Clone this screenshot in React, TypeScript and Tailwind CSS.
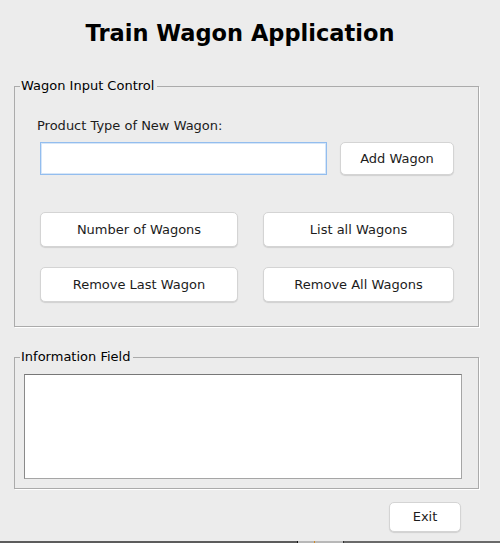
import React from "react";

const font = { fontFamily: '"DejaVu Sans", "Liberation Sans", sans-serif' };

function MacButton({ label, className }: { label: string; className: string }) {
  return (
    <button
      type="button"
      className={`shrink-0 rounded-[5px] border border-[#d4d4d4] bg-white text-[13px] text-[#1c1c1c] shadow-[0_1px_1px_rgba(0,0,0,0.12)] ${className}`}
    >
      {label}
    </button>
  );
}

export default function App() {
  return (
    <div className="flex h-[543px] w-[500px] flex-col overflow-hidden bg-[#ececec] text-black" style={font}>
      <h1 className="w-[480px] pt-[18px] text-center text-[22.5px] font-bold leading-[30px]">
        Train Wagon Application
      </h1>

      {/* Wagon input panel */}
      <fieldset className="ml-[14px] mt-[30px] w-[465px] border border-[#ababab] p-0 pb-[24px] shadow-[1px_1px_0_#ffffff]">
        <legend className="ml-[5px] pl-[1px] pr-[3px] text-[13px] leading-[16px]">Wagon Input Control</legend>
        <div className="ml-[22px] mt-[24px] text-[13px] leading-[16px] text-[#1c1c1c]">Product Type of New Wagon:</div>
        <div className="ml-[25px] mt-[8px] flex gap-[13px]">
          <input
            type="text"
            className="h-[33px] w-[287px] border border-[#93bdee] bg-white px-2 text-[13px] shadow-[inset_0_0_0_1px_#d6e6f8] outline-none"
          />
          <MacButton label="Add Wagon" className="h-[33px] w-[114px]" />
        </div>
        <div className="ml-[25px] mt-[37px] flex gap-[25px]">
          <MacButton label="Number of Wagons" className="h-[35px] w-[198px]" />
          <MacButton label="List all Wagons" className="h-[35px] w-[191px]" />
        </div>
        <div className="ml-[25px] mt-[20px] flex gap-[25px]">
          <MacButton label="Remove Last Wagon" className="h-[35px] w-[198px]" />
          <MacButton label="Remove All Wagons" className="h-[35px] w-[191px]" />
        </div>
      </fieldset>

      {/* Information panel */}
      <fieldset className="ml-[14px] mt-[22px] w-[465px] border border-[#ababab] p-0 pb-[9px] shadow-[1px_1px_0_#ffffff]">
        <legend className="ml-[5px] pl-[1px] pr-[3px] text-[13px] leading-[16px]">Information Field</legend>
        <textarea
          readOnly
          className="ml-[9px] mt-[9px] block h-[105px] w-[438px] resize-none border border-t-[#777777] border-l-[#8a8a8a] border-r-[#a5a5a5] border-b-[#a5a5a5] bg-white outline-none"
        />
      </fieldset>

      <div className="ml-[389px] mt-[13px]">
        <MacButton label="Exit" className="h-[30px] w-[72px]" />
      </div>

      <div className="mt-auto flex h-[2px]">
        <div className="w-[297px] bg-[#5c5c5c]" />
        <div className="w-[1px] bg-[#111111]" />
        <div className="w-[16px] bg-[#b8b8b8]" />
        <div className="w-[1px] bg-[#d08a2a]" />
        <div className="w-[28px] bg-[#b8b8b8]" />
        <div className="w-[1px] bg-[#333333]" />
        <div className="flex-1 bg-[#6a6a6a]" />
      </div>
    </div>
  );
}
